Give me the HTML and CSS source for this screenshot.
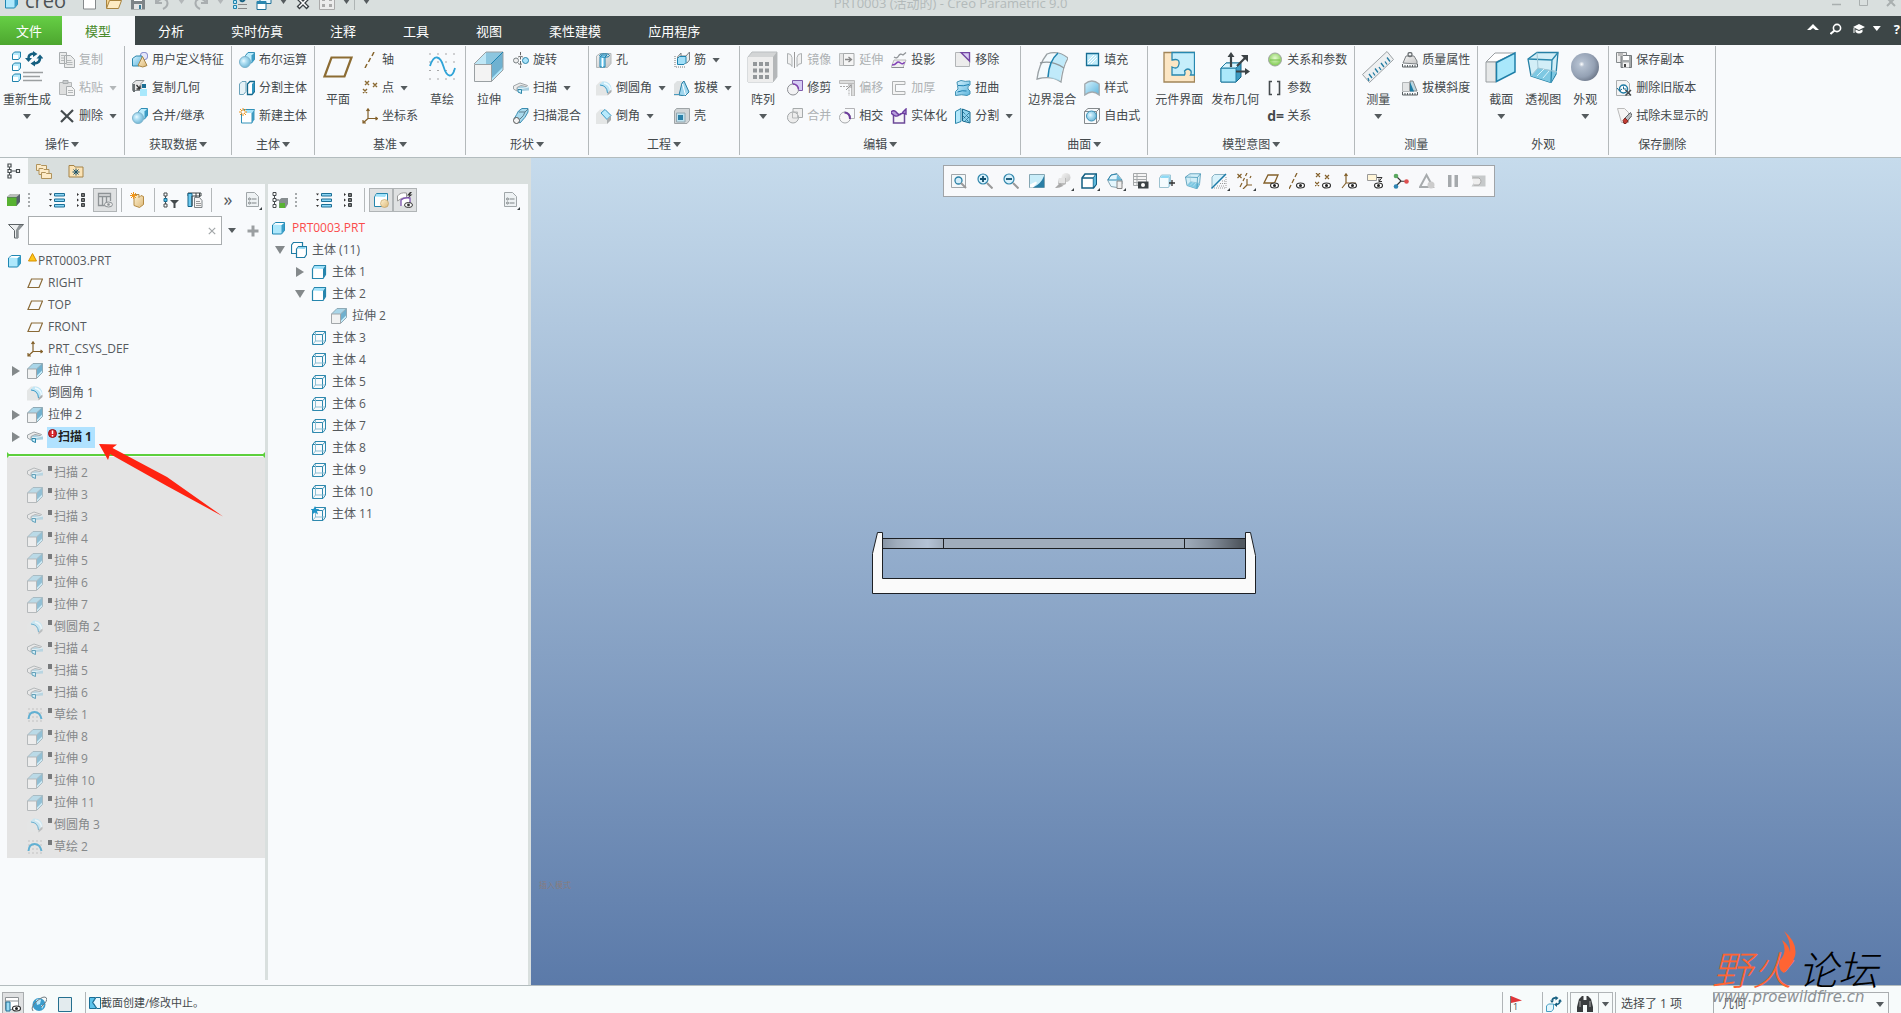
FILE: index.html
```html
<!DOCTYPE html>
<html lang="zh-CN">

<head>
    <meta charset="UTF-8">
    <meta name="viewport" content="width=device-width, initial-scale=1.0">
    <title>PRT0003 (活动的) - Creo Parametric 9.0</title>
    <link rel="stylesheet" href="styles.css">
</head>

<body>
    <!-- icon sprite -->
    <svg class="sprite" aria-hidden="true">
        <defs>
            <linearGradient id="gBlue" x1="0" y1="0" x2="1" y2="1"><stop offset="0" stop-color="#d8f4ff"/><stop offset="1" stop-color="#5cb4dc"/></linearGradient>
            <linearGradient id="gGrey" x1="0" y1="0" x2="1" y2="1"><stop offset="0" stop-color="#f4f4f4"/><stop offset="1" stop-color="#c4c4c4"/></linearGradient>
            <linearGradient id="gTan" x1="0" y1="0" x2="1" y2="1"><stop offset="0" stop-color="#fff3d4"/><stop offset="1" stop-color="#dcb878"/></linearGradient>
            <radialGradient id="gBall" cx=".38" cy=".4" r=".65"><stop offset="0" stop-color="#eefaff"/><stop offset=".3" stop-color="#b8e4f6"/><stop offset="1" stop-color="#6cb4d4"/></radialGradient>
            <radialGradient id="gSphere" cx=".38" cy=".4" r=".65"><stop offset="0" stop-color="#ffffff"/><stop offset=".15" stop-color="#b4c0d0"/><stop offset=".7" stop-color="#94a1b4"/><stop offset="1" stop-color="#6f7a8c"/></radialGradient>
            <radialGradient id="gGreen" cx=".5" cy=".4" r=".6"><stop offset="0" stop-color="#e4fad0"/><stop offset="1" stop-color="#7cc94c"/></radialGradient>
        </defs>
        <symbol id="copy" viewBox="0 0 16 16"><path d="M.5.5h7v11h-7zM5.500 3.500h6l4 4v8h-10z" fill="#ebecec" stroke="#a9adaf"/><path d="M2 3.500h3M2 6h3M2 8.500h3M7.500 8.500h5M7.500 10.500h6M7.500 12.500h6" stroke="#b5b9ba"/></symbol>
        <symbol id="paste" viewBox="0 0 16 16"><path d="M.5 2.500h12v12H.5z" fill="#dedfdf" stroke="#b4b7b8"/><path d="M4 .5h5v3H4z" fill="#c8cbcc" stroke="#a9adaf"/><path d="M7.500 6.500h5l3 3v6h-8z" fill="#f3f3f3" stroke="#a9adaf"/><path d="M9 10.500h5M9 12.500h5" stroke="#b5b9ba"/></symbol>
        <symbol id="del" viewBox="0 0 16 16"><path d="M2 2.500 14 14M14 2 2 14" stroke="#444b4e" stroke-width="2.200" fill="none"/></symbol>
        <symbol id="udf" viewBox="0 0 16 16"><circle cx="12" cy="4" r="3.800" fill="#e4e6fa" stroke="#7f86c8"/><path d="M.5 6.500 4 4h6v7l-3 3H.5z" fill="url(#gBlue)" stroke="#2a86ac"/><path d="m10.500 4.500 4.500 9q-4 3-9 0z" fill="url(#gTan)" stroke="#a98747"/></symbol>
        <symbol id="copygeo" viewBox="0 0 16 16"><path d="M.5 3.500 4 .5h8l-3 3v7H.5z" fill="#e8e8e8" stroke="#888d90"/><path d="M1 4h2v8H1z" fill="#666d70"/><path d="m4.500 5 3 3.500M8 5.500v3.500H4.500" stroke="#333" fill="none" stroke-width="1.300"/><path d="M8 9h7v7H8z" fill="#a8e8fc"/><path d="M10 4h4v4h-4z" fill="#1b6e94"/></symbol>
        <symbol id="boolean" viewBox="0 0 16 16"><path d="M6.500 3.500 9 .5h6.500v7l-3 3.500h-6z" fill="#bcecfc" stroke="#2f8db5"/><path d="m12.500 3.500 3-3v7l-3 3.500z" fill="#3d9cc4"/><circle cx="6" cy="10" r="5.500" fill="url(#gBall)" stroke="#7db4cc"/></symbol>
        <symbol id="splitbody" viewBox="0 0 16 16"><path d="M.5 4 3 1.500h4v10L4.500 14.500h-4z" fill="#e6f2f7" stroke="#6ba3bb"/><path d="M8.500 4 11 1.500h4.500v10L13 14.500H8.500z" fill="#fff" stroke="#13678b" stroke-width="1.300"/><path d="M13 4v10l2.500-3V1.500z" fill="#2f95bf"/></symbol>
        <symbol id="newbody" viewBox="0 0 16 16"><path d="m2.500 5 2-3.500h11L13 5v10H2.500z" fill="#fff" stroke="#3191b8"/><path d="m13 5 2.500-3.500v10L13 15z" fill="#3c9ac1"/><path d="M6 2h9l-2 3H7z" fill="#a8e4fb"/><path d="M4 0v8M0 4h8M1 1l6 6M7 1 1 7" stroke="#f0951a"/><circle cx="4" cy="4" r="1.500" fill="#fff"/></symbol>
        <symbol id="axis" viewBox="0 0 16 16"><path d="m12 0-2 4M8.500 6l-2 4M5 12l-2 4" stroke="#86642c" stroke-width="1.500"/></symbol>
        <symbol id="point" viewBox="0 0 16 16"><path d="m3 1 4 4M7 1 3 5M11 3l4 4M15 3l-4 4M1 9l4 4M5 9l-4 4" stroke="#8b6a33" stroke-width="1.400"/></symbol>
        <symbol id="csys" viewBox="0 0 16 16"><path d="M6 1v9.500h9.500M6 10.500 1 15M4.500 3 6 .8 7.500 3M13.500 9l2 1.500-2 1.500M1 12v3h3" stroke="#83602a" stroke-width="1.200" fill="none"/></symbol>
        <symbol id="revolve" viewBox="0 0 16 16"><circle cx="3" cy="8.500" r="2.500" fill="#eee" stroke="#7a8285"/><circle cx="12.500" cy="8.500" r="3" fill="#a9e4fb" stroke="#2b85aa"/><path d="M7.500 0v16" stroke="#666" stroke-dasharray="3 1.500"/><path d="M5 5q2.500-1.500 5 0M9 12q-2 1-4-.5" stroke="#777" fill="none"/></symbol>
        <symbol id="sweep" viewBox="0 0 16 16"><path d="M3.500 8 8 6l8 1v3.500L9 11v3l-4-2z" fill="#a8cfe0"/><path d="M.5 6 7 3l7.500 2.500-1 1.200L8 5.500 4 7.500V11L.5 9z" fill="#ececec" stroke="#9fa5a8"/><path d="M5 8.500h4l7-1.500" stroke="#dff1f8" fill="none"/><path d="M5 9.500h3.500v4L5 12z" fill="#c8effc" stroke="#2f86a9"/></symbol>
        <symbol id="blend" viewBox="0 0 16 16"><path d="M1 11Q4 6 5.500 3L9 .5h6V4Q13 9 7 15z" fill="#a9daee" stroke="#3a8db1"/><path d="M6 4h6l3-3M12 4q-1 4-5 7" stroke="#5b7f8e" fill="none"/><circle cx="3.500" cy="12.500" r="3" fill="#f3f3f3" stroke="#555"/></symbol>
        <symbol id="hole" viewBox="0 0 16 16"><path d="M.5 4 4 1.500h11v10l-3.500 4H.5z" fill="url(#gGrey)" stroke="#b3b8ba"/><path d="M4 4.500 6 3h5L9 5v10H4z" fill="#a2e0fa" stroke="#1b81af"/><ellipse cx="8.500" cy="3.500" rx="5" ry="1.800" fill="none" stroke="#1b81af"/><path d="M6.500 6v9" stroke="#fff"/></symbol>
        <symbol id="round" viewBox="0 0 16 16"><path d="M0 5.500 4 1.500h6q5 2 5 7v3l-4 4H0z" fill="#e4e6e6"/><path d="M3 5 6.500 1.500Q15 1 15.500 9l-4 3.500Q11 5.500 3 5z" fill="#bfe6f6"/><path d="M8 3q6 1.500 6.500 7" stroke="#eefaff" fill="none" stroke-width="1.500"/><path d="M4 5q7 .5 7.500 8" stroke="#3a9ac6" fill="none"/><path d="m11.500 13 4-3.500V12l-4 3.500z" fill="#a9adaf"/></symbol>
        <symbol id="chamfer" viewBox="0 0 16 16"><path d="M0 5.500 4 1.500h6l5 5.500v5l-4 4H0z" fill="#e4e6e6"/><path d="m5 5 4-3.500 6 6-4 4z" fill="#b8eafc" stroke="#3a9ac6"/><path d="m11 11.500 4-4V12l-4 4z" fill="#a9adaf"/></symbol>
        <symbol id="rib" viewBox="0 0 16 16"><path d="M1 4v11h11" fill="none" stroke="#777" stroke-dasharray="1 1"/><path d="M3.500 5v6H13l2.500-3V0L12 4H7V1z" fill="#eceeee" stroke="#7b8285"/><path d="m3.500 6.500 2-2H12v6l-2 2H3.500z" fill="#a2dff8" stroke="#1e83ae"/></symbol>
        <symbol id="draft" viewBox="0 0 16 16"><path d="M0 4 3 1h7l5 10-4 5H0z" fill="#dfe2e3"/><path d="m5 15 3-12 2-2 5 11-4 4z" fill="#9fd6ee" stroke="#2a7fa4"/><path d="m8.500 4 3 11" stroke="#fff"/><path d="M0 14.500h5" stroke="#4a9cc0"/></symbol>
        <symbol id="shell" viewBox="0 0 16 16"><path d="m.5 3 2-2.500h13v12L13 15.500H.5z" fill="#d1d5d7" stroke="#9ea4a7"/><path d="M2.500 5H11v9H2.500z" fill="#bde2f0" stroke="#96a8b0"/><path d="M4 7h5v5H4z" fill="#2a80a8"/></symbol>
        <symbol id="mirror" viewBox="0 0 16 16"><path d="M.5 1.500q4 0 4.500 4v9q-1-3-4.500-3zM14.500 1.500q-4 0-4.500 4v9q1-3 4.500-3z" fill="#f1f1f1" stroke="#adb1b3"/><path d="M7.500 0v16" stroke="#999"/></symbol>
        <symbol id="trim" viewBox="0 0 16 16"><path d="M5.500.5h10v10h-10z" fill="#d6ccf4" stroke="#7e5bab"/><circle cx="6" cy="9.500" r="5.500" fill="#f2f2f4" stroke="#8c8f94"/><path d="M6 4a5.500 5.500 0 0 1 5.500 5.500" stroke="#7e3fae" stroke-width="1.500" fill="none"/></symbol>
        <symbol id="merge" viewBox="0 0 16 16"><path d="M6 .5h9.500v9H10V5H6z" fill="#eee" stroke="#a6aaab"/><circle cx="6" cy="9.500" r="5.500" fill="#ececec" stroke="#a2a6a8"/><path d="M5.500 4h5v6h-5z" fill="none" stroke="#b7b9ba"/></symbol>
        <symbol id="extend" viewBox="0 0 16 16"><path d="M.5 1.500h4v12h-4z" fill="#e5e5e5" stroke="#b9bcbd"/><path d="M4.500 1.500H15v12H4.500z" fill="#f5f5f5" stroke="#a8abac"/><path d="M6 7.500h6M9.500 5l3 2.500-3 2.500" stroke="#888" stroke-width="1.300" fill="none"/></symbol>
        <symbol id="offset" viewBox="0 0 16 16"><path d="M.5.5h15v3h-15zM12.500 3.500h3V16h-3z" fill="#dcdddd" stroke="#bbb"/><path d="M1 6.500h9V16" stroke="#aaa" fill="none" stroke-dasharray="2 1"/><path d="m7 10 5-5M9 5h3v3" stroke="#999" fill="none"/></symbol>
        <symbol id="intersect" viewBox="0 0 16 16"><path d="M6 .5h9.500v10H10" fill="none" stroke="#b3b3b6"/><circle cx="6" cy="9.500" r="5.500" fill="#f7f7f7" stroke="#a6a9ac"/><path d="M5.500 4.500q5.500.5 5.500 6.500" stroke="#6d3c9c" stroke-width="2" fill="none"/></symbol>
        <symbol id="project" viewBox="0 0 16 16"><path d="M3 5q3 2 4.500-1T12 3l3-2.500" stroke="#909498" stroke-width="1.300" fill="none"/><path d="M0 15.500 3 8h12l-3 7.500z" fill="#f0f0f0" stroke="#b8b8b8"/><path d="M1 13q3 0 4.500-2t4 0 4-1" stroke="#8344b8" stroke-width="1.600" fill="none"/><path d="M1 15.500h12" stroke="#8a8d90"/></symbol>
        <symbol id="thicken" viewBox="0 0 16 16"><path d="M1.500 1.500H14v3H4.500v7H14v3H1.500z" fill="#f4f4f4" stroke="#aeb1b2"/></symbol>
        <symbol id="solidify" viewBox="0 0 16 16"><path d="M2.500 5v10h11V5" fill="#f5f5f7" stroke="#6c4a98" stroke-width="1.500"/><path d="M0 4q3-3 6 1t6-1l3-3v5q-4-2-7 1T0 5z" fill="#b79ddc" stroke="#6b3e9f" stroke-width="1.400"/></symbol>
        <symbol id="remove" viewBox="0 0 16 16"><path d="M.5.5h14v14H.5z" fill="#ececec" stroke="#b2b5b7"/><path d="M6 .5h8.500V9z" fill="#d9cdf5" stroke="#7446a3" stroke-width="1.400"/></symbol>
        <symbol id="twist" viewBox="0 0 16 16"><path d="M2 2 6 .5q4 1.500 9 .5v4q-3 1-2 4l2 2v3l-3 1.500q-5-1.500-11.500 0v-4q4-2 2-6z" fill="url(#gBlue)" stroke="#4292b4"/><path d="M3 5.500q5 1 11-1M2.500 12q5-2 9-1" stroke="#1d80b0" fill="none"/></symbol>
        <symbol id="split" viewBox="0 0 16 16"><path d="M.5 3.500 6 .5v13l-5.500 2z" fill="#b3e8fb" stroke="#2c86aa"/><path d="m7.500 1 7.500 3v11l-7.500-2z" fill="#8ed4ee" stroke="#16698d"/><path d="m8 4 6 6M8 8l6 6M14 5l-6 6M14 9l-4 4" stroke="#12577a" stroke-dasharray="1 1"/></symbol>
        <symbol id="fill" viewBox="0 0 16 16"><path d="M2.500 1.500h12v12h-12z" fill="#c0ecfb" stroke="#176e94" stroke-width="1.300"/><path d="m4 9 6-6M4 12l8-8M7 12l6-6" stroke="#fff"/></symbol>
        <symbol id="style" viewBox="0 0 16 16"><path d="M.8 4q7-6 14.400 0v11q-7-6-14.400 0z" fill="url(#gBlue)" stroke="#a2a9ad" stroke-width="1.300"/></symbol>
        <symbol id="freestyle" viewBox="0 0 16 16"><path d="M.5 3.500 4 .5h11.500v11l-3 4H.5zM.5 3.500h12v12M12.500 3.500l3-3" fill="none" stroke="#84898c"/><circle cx="7.500" cy="8" r="5" fill="url(#gBall)" stroke="#3b92b8"/></symbol>
        <symbol id="ball" viewBox="0 0 16 16"><circle cx="8" cy="7.500" r="6.500" fill="url(#gGreen)" stroke="#a0a6a1"/><path d="M3 8h10" stroke="#74bf48"/></symbol>
        <symbol id="bracket" viewBox="0 0 16 16"><path d="M5 1.500H2.500v13H5M10 1.500h2.500v13H10" fill="none" stroke="#454b4e" stroke-width="1.600"/></symbol>
        <symbol id="mass" viewBox="0 0 16 16"><path d="m1 11 3-7h8l3 5v3z" fill="url(#gGrey)" stroke="#7c8184"/><circle cx="8" cy="2.500" r="2" fill="none" stroke="#6b7073" stroke-width="1.300"/><path d="M.5 12v3h15v-3M3 13v2M5.500 13v2M8 13v2M10.500 13v2M13 13v2" stroke="#5a6063" fill="none"/></symbol>
        <symbol id="draftchk" viewBox="0 0 16 16"><path d="M.5 2.500h7v9h-7z" fill="#e3e5e6" stroke="#b2b6b8"/><path d="m8 1 3 0 4 10H8z" fill="#b8d6e2" stroke="#888"/><path d="m8 2 4 9.500H8z" fill="#1b7ba3"/><path d="M.5 12v3h15v-3M3 13v2M5.500 13v2M8 13v2M10.500 13v2M13 13v2" stroke="#5a6063" fill="none"/></symbol>
        <symbol id="savecopy" viewBox="0 0 16 16"><path d="M.5.5h10v10H.5z" fill="#eee" stroke="#858a8d"/><path d="M5 3.500h10.500V15.500H5z" fill="#a6aaac" stroke="#74797c"/><path d="M7 4h6v4H7z" fill="#fff"/><path d="M7 10.500h6v5H7z" fill="#f3f3f3"/><path d="M8 12h2v3H8z" fill="#444"/><path d="M2 1h5v3H2z" fill="#bbb"/></symbol>
        <symbol id="delold" viewBox="0 0 16 16"><path d="M.5.5h10l3 3v12H.5z" fill="#f4f4f4" stroke="#a9adaf"/><circle cx="7.500" cy="9" r="4" fill="#fff" stroke="#1c7aa4" stroke-width="1.500"/><path d="M7.500 6.500V9H10M1 8l2.500 3L6 9" stroke="#14678c" fill="none"/><path d="m9.500 10 5.500 5.500M15 10l-5.500 5.500" stroke="#454b4e" stroke-width="1.500"/></symbol>
        <symbol id="erase" viewBox="0 0 16 16"><path d="M1.500.5h7l4 4v10h-7z" fill="#f5f5f5" stroke="#bbb"/><path d="m8.500 10.500 6-6 1.500 3-5 6z" fill="#b9bdc0" stroke="#5e6467"/><path d="m7 12.500 2-2.500 3 3-2 2.500H8z" fill="#c33b32" stroke="#7e2a25"/></symbol>

        <symbol id="regen" viewBox="0 0 32 32"><g fill="#b8eafc" stroke="#2083ac"><path d="m1.500 3 2-2h6v5l-2 2.500h-6zM1.500 14l2-2h6v5l-2 2.500h-6zM1.500 25l2-2h6v5l-2 2.500h-6z"/></g><g fill="#fff"><path d="M2 4h5v4H2zM2 15h5v4H2zM2 26h5v4H2z"/></g><path d="M12 21.500h20M12 25.500h17M12 29.500h19" stroke="#9b9fa1" stroke-width="1.600"/><path d="M17.500 8q-.5-5 5-5.500M29 6q.5 6-5.500 6.500" stroke="#155f80" stroke-width="2.600" fill="none"/><path d="m22 0 4.500 3L22 6zM24 9.500v6l-4.500-3zM14 7h7l-3.500 4zM25.500 7.500h7L29 3.500z" fill="#155f80"/></symbol>
        <symbol id="plane" viewBox="0 0 32 32"><path d="M9.500 6.500h20l-7 19h-20z" fill="none" stroke="#8c6c33" stroke-width="2.200"/></symbol>
        <symbol id="sketch" viewBox="0 0 32 32"><path d="M3.500 3h26M3.500 11h26M3.500 19.500h26M3.500 28h26" stroke="#555" stroke-width="1.200" stroke-dasharray="1 7"/><path d="M4 15Q7 6 11 6.500q4 .5 6.500 9t6 9Q27 25 29 17" stroke="#2fa4d8" stroke-width="1.800" fill="none"/></symbol>
        <symbol id="extrude" viewBox="0 0 32 32"><path d="M1 13 13 1h17L18 13z" fill="#bfe7f6"/><path d="M13 1h17L18 13h-5z" fill="#8cc6df"/><path d="M18 13 30 1v18L18 31z" fill="#6fb1d0"/><path d="M18 31V28l12-12v3z" fill="#b0e6fa"/><path d="M1 13 13 1h17v18L18 31" fill="none" stroke="#9aa0a3"/><path d="M18 13 30 1" stroke="#1d84b2"/><path d="M1.500 13.500h17v17h-17z" fill="#f3f3f3" stroke="#9aa0a3"/></symbol>
        <symbol id="pattern" viewBox="0 0 32 32"><path d="M1 6 5 1h25v25l-4 5H1z" fill="#d3d5d6" stroke="#bbbfc1"/><path d="M1 6h25v25H1z" fill="#ededed"/><path d="m26 6 4-5v25l-4 5z" fill="#b4b7b9"/><path d="M6 11h4v4H6zM12 11h4v4h-4zM18 11h4v4h-4zM6 17.500h4v4H6zM12 17.500h4v4h-4zM18 17.500h4v4h-4zM6 24h4v4H6zM12 24h4v4h-4zM18 24h4v4h-4z" fill="#93979a"/></symbol>
        <symbol id="boundary" viewBox="0 0 32 32"><path d="M11 3q11-4 21 4-5 8-7 24-9-7-24-3Q3 13 11 3z" fill="#f3fafd" stroke="#9aa1a5" stroke-width="1.300"/><path d="M22 2q6 2 9 5-5 10-7 23l-12-4q2-14 10-24z" fill="#a9e2f8" opacity=".7"/><path d="M4 12q12-3 24 5" stroke="#8e979b" fill="none" stroke-width="1.300"/><path d="M22 2q-9 8-10 24" stroke="#1f84b0" stroke-width="1.600" fill="none"/></symbol>
        <symbol id="compif" viewBox="0 0 32 32"><path d="M1 1.500h30.500V31H1z" fill="#fce6c4" stroke="#a08558" stroke-width="1.300"/><path d="M9 1.500h22.500V24h-4q1-1.500.500-4-3-4-6.500 0 1 2 0 4H9v-8q6 3 7-3t-7-4z" fill="#c6eefb" stroke="#2788b0" stroke-width="1.300"/></symbol>
        <symbol id="publish" viewBox="0 0 32 32"><path d="m2 17 5-5h15v14l-5 5H2z" fill="#3e9bc2" stroke="#146486"/><path d="M2 17h15v14H2z" fill="#abe8fb" stroke="#207ea4"/><path d="m2 17 5-5h15l-5 5z" fill="#d8f4fd" stroke="#207ea4"/><path d="M12 16V4M18 15l9-9M17 20.500h12" stroke="#3c4346" stroke-width="2.200"/><path d="m8.500 6 3.500-5 3.500 5zM22 4h7v7zM26 17l5 3.500-5 3.500z" fill="#3c4346"/></symbol>
        <symbol id="measure" viewBox="0 0 32 32"><path d="M.5 23.500 25 .5l6.500 8L7.500 31.500z" fill="#eef0f1" stroke="#9ba1a4"/><path d="m7 30-1-3M10 27l-3-4M13 24.500l-2-3M16 21.500l-3-4M19 19l-2-3M22 16l-3-4M25 13.500l-2-3M28 10.500l-3-4" stroke="#217ba2" stroke-width="1.300"/></symbol>
        <symbol id="section" viewBox="0 0 32 32"><path d="m1 11 9-9h20L11 11z" fill="#fff" stroke="#9a9fa2"/><path d="M1 11h10v20H1z" fill="#e6e8e8" stroke="#9a9fa2"/><path d="M11.500 11.500 30 2v19l-18.500 9.500z" fill="#a9e8fb" stroke="#1e7fa8" stroke-width="1.500"/></symbol>
        <symbol id="persp" viewBox="0 0 32 32"><path d="m1 8 9-6.500h21L29 23l-5 8.500L4 25z" fill="#d2eef7" stroke="#2580a5" stroke-width="1.300"/><path d="M4 25 11 17l19 3-6 11.500z" fill="#7ec8e2"/><path d="m1 8 24 1 6-7.500M25 9l-1 22" stroke="#2a87ac" fill="none" stroke-width="1.300"/><path d="M10 1.500 11 17l19 4M4 25l7-8" stroke="#a3c6d4" fill="none"/><path d="m10 25 7-7M16 27l6-7" stroke="#d8f3fc"/></symbol>
        <symbol id="sphere" viewBox="0 0 32 32"><circle cx="16" cy="16" r="14" fill="url(#gSphere)"/></symbol>

        <symbol id="cube" viewBox="0 0 16 16"><path d="m1.500 5 3-2.500h9v8l-3 3.500h-9z" fill="#aee8fc" stroke="#1f86b2"/><path d="m10.500 5 3-2.500v8l-3 3.500z" fill="#3c9fc9"/><path d="m2 4.500 3-1.500h8l-2.500 2z" fill="#fff"/></symbol>
        <symbol id="gcube" viewBox="0 0 16 16"><path d="m1 5 3.500-3H14v8l-3.500 4H1z" fill="#55606a"/><path d="m1 5 3.500-3H14l-3.500 3z" fill="#b9bdb9"/><path d="M1 5.500h9.500V14H1z" fill="#58b232"/></symbol>
        <symbol id="bodies" viewBox="0 0 16 16"><path d="m.5 3 2-2.500h9v8l-2 3h-9z" fill="#fff" stroke="#1f7ca4" stroke-width="1.200"/><path d="m5.500 7 2-2.500h8v8l-2 3h-8z" fill="#fff" stroke="#1f7ca4" stroke-width="1.200"/><path d="m6 6.500 1.500-1.500H15l-1.500 2z" fill="#8cd5f0"/></symbol>
        <symbol id="body" viewBox="0 0 16 16"><path d="m1.500 5 2-3.500h11v9l-2.500 4H1.500z" fill="#fff" stroke="#2686ad" stroke-width="1.200"/><path d="m2 4.500 2-2.500h10l-2 3z" fill="#9fe2fb"/><path d="m12 5 2.500-3.500v9l-2.500 4z" fill="#2885ad"/></symbol>
        <symbol id="ebody" viewBox="0 0 16 16"><path d="m1.500 5 2.500-3.500h10.500v9.500l-2.500 3.500H1.500zM1.500 4.500h10v10M12 4.500l2.500-3" fill="none" stroke="#2f89ae"/><path d="M4.500 2v9H14M2 14l2.500-3" stroke="#8bbfd4" fill="none"/></symbol>
        <symbol id="star" viewBox="0 0 16 16"><use href="#ebody"/><path d="m4 0 1.300 3H8.500L6 5l1 3.500L4 6.500 1 8.500 2 5-.5 3h3.200z" fill="#1e95c9"/></symbol>
        <symbol id="ext" viewBox="0 0 16 16"><path d="m.5 6 5.500-5.500h9.500L9.500 6z" fill="#a9d6e9"/><path d="M9.500 6l6-5.500v9l-6 6z" fill="#6fb0ce"/><path d="m9.500 15.500V13l6-6v2.500z" fill="#c5ecfb"/><path d="m.5 6 5.500-5.500h9.500v9l-6 6M9.500 6l6-5.500" stroke="#8faab6" fill="none"/><path d="M.5 6h9v9.500h-9z" fill="#f1f2f2" stroke="#a2a7aa"/></symbol>
        <symbol id="dplane" viewBox="0 0 16 16"><path d="M4.500 4h11L12 12.500H1z" fill="none" stroke="#8a6a37" stroke-width="1.200"/></symbol>
        <symbol id="curve" viewBox="0 0 16 16"><path d="M1.500 2h14M1.500 6h14M1.500 10h14M1.500 14h14" stroke="#888" stroke-dasharray="1 3"/><path d="M1.500 12Q2 5 7.500 5t7 7" stroke="#2b9bcc" stroke-width="2" fill="none"/></symbol>

        <symbol id="mtree" viewBox="0 0 16 16"><path d="M3.500 4v8M3.500 8H11" stroke="#4b5154"/><path d="M2 1h3v3H2zM2 6.500h3v3H2zM2 12h3v3H2zM10.500 6.500h3v3h-3z" fill="#fff" stroke="#444a4d" stroke-width="1.200"/></symbol>
        <symbol id="layers" viewBox="0 0 16 16"><g fill="#fdebc8" stroke="#b0935c"><path d="M.5 1.500h4l1 1h5v5h-10z"/><path d="M3 5.500h4l1 1h5v5H3z"/><path d="M5.500 9.500h4l1 1h5v5h-10z"/></g></symbol>
        <symbol id="favs" viewBox="0 0 16 16"><path d="M1 2.500h5l1 1.500h8v10H1z" fill="#fbe3b5" stroke="#a48348"/><path d="M8 5.500v7M4.500 9h7M5.500 6.500l5 5M10.500 6.500l-5 5" stroke="#174f68"/></symbol>
        <symbol id="tlist" viewBox="0 0 16 16"><path d="M0 1.500h3l-1.500 2zM0 7h3L1.500 9zM0 13h3l-1.500 2z" fill="#333"/><path d="M5.500 1.500h10v2.500h-10zM5.500 7h10v2.500h-10zM5.500 12.500h10v2.500h-10z" fill="#8bd6f5" stroke="#1c6f96"/></symbol>
        <symbol id="tlist2" viewBox="0 0 16 16"><path d="m4 1 2 1.500L4 4zM4 6.500 6 8 4 9.500zM4 12l2 1.500L4 15z" fill="#333"/><path d="M8.500 1.500h3v3h-3zM8.500 6.500h3v3h-3zM8.500 11.500h3v3h-3z" fill="#777" stroke="#3b4144"/></symbol>
        <symbol id="cols" viewBox="0 0 16 16"><path d="M1.500 1.500h12v3h-12zM1.500 4.500h4v9h-4zM5.500 4.500h4v9h-4zM9.500 4.500h4V9" fill="none" stroke="#8e9396" stroke-width="1.300"/><ellipse cx="11.500" cy="12.500" rx="4" ry="2.500" fill="#e6e6e6" stroke="#8e9396"/><circle cx="11.500" cy="12.500" r="1.300" fill="#8e9396"/></symbol>
        <symbol id="newpart" viewBox="0 0 16 16"><path d="M4 2.500h5v3l2-2 2.500 1v8l-4 3-5.500-2z" fill="url(#gTan)" stroke="#b58b43"/><path d="M3.500 0v7M0 3.500h7M1 1l5 5M6 1 1 6" stroke="#f0951a"/></symbol>
        <symbol id="tfilter" viewBox="0 0 16 16"><path d="M2.500 3v11" stroke="#4b5154"/><path d="M1 1h3v3H1zM1 12h3v3H1z" fill="#fff" stroke="#444a4d"/><path d="M1 6.500h3v3H1z" fill="#4cc0ea" stroke="#1a6b90"/><path d="M7 8h9l-3.500 3.500V16h-2v-4.500z" fill="#444a4d"/></symbol>
        <symbol id="tcols" viewBox="0 0 16 16"><path d="M1 1h13v3H1z" fill="#fff" stroke="#3d4447"/><path d="M1 1.500h4v13H1z" fill="#6ccaf0" stroke="#14658a"/><path d="M5 4v10M9 1v5M12.500 1v4" stroke="#3d4447"/><path d="M7.500 5.500h5l2.500 3v7H7.500z" fill="#f5f5f5" stroke="#7f8588"/><path d="M9 9.500h4M9 11.500h5M9 13.500h5" stroke="#999"/></symbol>
        <symbol id="page" viewBox="0 0 16 16"><path d="M2.500.5h8l4 4v10h-12z" fill="#eef2f4" stroke="#a0a6a9"/><path d="M7.500 7h5M7.500 11h5" stroke="#7e8487"/><circle cx="5.500" cy="7" r="1" fill="none" stroke="#7e8487"/><circle cx="5.500" cy="11" r="1" fill="none" stroke="#7e8487"/></symbol>
        <symbol id="treecube" viewBox="0 0 16 16"><path d="M2.500 3v11M3 8h4" stroke="#4b5154"/><path d="M1 .5h3v3H1zM1 6.500h3v3H1zM1 12.500h3v3H1z" fill="#fff" stroke="#444a4d"/><path d="m7 8 2.500-2H16v6l-2.500 4H7z" fill="#868d8f"/><path d="M7.500 11H13v5H7.500z" fill="#58b232"/></symbol>
        <symbol id="bodyball" viewBox="0 0 16 16"><path d="m1.500 5 2-3.500h11v9l-2.500 4H1.500z" fill="#fff" stroke="#2686ad"/><path d="m2 4.500 2-2.500h10l-2 3z" fill="#9fe2fb"/><circle cx="11.500" cy="11.500" r="4" fill="url(#gTan)" stroke="#bd9b5b" stroke-width=".6"/></symbol>
        <symbol id="quilt" viewBox="0 0 16 16"><path d="M.5 9V4q3-4 9-3v5q-5-1-9 3z" fill="#fff" stroke="#999"/><path d="M4 14V8q3-3 9-2v6" fill="#fff" stroke="#7e55b0" stroke-width="1.300"/><path d="m13 0-3 3.500h2.500L11 6l4.500-3.500H13L15 0z" fill="#333"/><ellipse cx="11.500" cy="13" rx="4" ry="2.500" fill="#fff" stroke="#333"/><circle cx="11.500" cy="13" r="1.400" fill="#333"/></symbol>
        <symbol id="funnel" viewBox="0 0 16 16"><path d="M.5 1.500h15l-5.500 6v7.500H6.500V7.500z" fill="#eceeef" stroke="#5d6366"/><path d="M10 7.500 15 2h-4L8 7v8h2z" fill="#8d9396"/></symbol>
        <symbol id="plus" viewBox="0 0 16 16"><path d="M8 2.500v11M2.500 8h11" stroke="#9b9fa1" stroke-width="3"/></symbol>

        <symbol id="refit" viewBox="0 0 16 16"><path d="M.5 1.500h14v13H.5z" fill="#f4f8fa" stroke="#a0a6aa"/><circle cx="7.500" cy="7.500" r="3.500" fill="#d5eefa" stroke="#2b80a6" stroke-width="1.300"/><path d="m10 10 5 5" stroke="#999" stroke-width="2"/></symbol>
        <symbol id="zin" viewBox="0 0 16 16"><circle cx="6" cy="6" r="5" fill="#d8f1fc" stroke="#3086ab" stroke-width="1.200"/><path d="M6 3v6M3 6h6" stroke="#10506f" stroke-width="1.800"/><path d="m10 10 5.500 5.500" stroke="#999" stroke-width="2"/></symbol>
        <symbol id="zout" viewBox="0 0 16 16"><circle cx="6" cy="6" r="5" fill="#d8f1fc" stroke="#3086ab" stroke-width="1.200"/><path d="M3 6h6" stroke="#10506f" stroke-width="1.800"/><path d="m10 10 5.500 5.500" stroke="#999" stroke-width="2"/></symbol>
        <symbol id="repaint" viewBox="0 0 16 16"><path d="M.5 1.500h15v13H.5z" fill="#c9edf9" stroke="#85a6b3"/><path d="M15 3v11.500H4Q12 11 15 3z" fill="#2a7ea5"/><path d="M1 11.500 7 8.500l1 1.500-4 4.500H1z" fill="#fff"/></symbol>
        <symbol id="shade" viewBox="0 0 16 16"><circle cx="11" cy="4.500" r="4.500" fill="url(#gGrey)"/><path d="M4 5h7v6l-4 2-4-2z" fill="#bbb"/><path d="M4 5h6v5H4z" fill="#e4e4e4"/><path d="m0 15 5-5 3 3q-4 2.500-8 2z" fill="#a8a8a8"/></symbol>
        <symbol id="box" viewBox="0 0 16 16"><path d="m1 5 3-4h11.500v10l-3 4H1z" fill="#fff" stroke="#125f83" stroke-width="1.500"/><path d="M1 5h11.500v10M12.500 5l3-4" stroke="#125f83" fill="none" stroke-width="1.400"/><path d="m12.500 5 2.500-3.500V11l-2.500 3z" fill="#5cb8dc"/></symbol>
        <symbol id="orient" viewBox="0 0 16 16"><path d="m4 2 6-1.500L15 7v4l-5 3.500-6-1L.5 7z" fill="#e4f6fd" stroke="#86a4b1"/><path d="m10 1.500 4.500 5H9.500z" fill="#6bbbdc"/><path d="m1 7 3-5 6-1M1 7h14" fill="none" stroke="#2e88b0"/><path d="M10 8h5v7.500h-5z" fill="#eee" stroke="#888"/></symbol>
        <symbol id="views" viewBox="0 0 16 16"><path d="M.5.5h13v12H.5zM.5 3.500h13M.5 6.500h13M.5 9.500h13M4 .5v12" fill="#f5f5f5" stroke="#a5a9ab"/><path d="M5 8.500h10.500v7H5z" fill="#3b4144"/><circle cx="10" cy="12" r="2" fill="#fff"/></symbol>
        <symbol id="anno" viewBox="0 0 16 16"><path d="m.5 5 2-3h9v9l-2 3.500h-9z" fill="#f4fbfe" stroke="#9dc2d0"/><path d="m1 5 2-2.500h8L9.500 5z" fill="#8fdaf5"/><path d="M9.500 5 11.500 2v9l-2 3.500z" fill="#9ccde0"/><path d="M10 10h6M13 7v6" stroke="#333" stroke-width="1.300"/></symbol>
        <symbol id="sect2" viewBox="0 0 16 16"><path d="M1 15V4l2.500-2.500H14z" fill="#d9f2fb" stroke="#8ab3c4"/><path d="M3 15h12V3M6 13h8M9 10.500h5M11 8h3" stroke="#999" stroke-dasharray="1 1" fill="none"/><path d="M.5 15.500 15 1" stroke="#1b7ba8" stroke-width="1.400"/></symbol>
        <symbol id="dtm" viewBox="0 0 16 16"><path d="m.5 1 4 4M4.500 1l-4 4M10 0 8.500 3M7.500 5 6 8M5 10l-2 4M10 6v6h5M10 12l-4 4M14 3l-1 2" stroke="#83602a" stroke-width="1.200" fill="none"/></symbol>
        <symbol id="eye" viewBox="0 0 16 16"><ellipse cx="11.500" cy="12.500" rx="4" ry="2.500" fill="#fff" stroke="#333" stroke-width="1.200"/><circle cx="11.500" cy="12.500" r="1.500" fill="#222"/></symbol>
        <symbol id="planev" viewBox="0 0 16 16"><path d="M5 2h10l-3.500 8H1z" fill="none" stroke="#83602a" stroke-width="1.300"/><use href="#eye"/></symbol>
        <symbol id="axisv" viewBox="0 0 16 16"><path d="M8 0 6 4M5 6l-2 4M2 12l-2 4" stroke="#83602a" stroke-width="1.300"/><use href="#eye"/></symbol>
        <symbol id="pointv" viewBox="0 0 16 16"><path d="m1 0 4 4M5 0 1 4M10 2l4 4M14 2l-4 4M0 9l4 4M4 9l-4 4" stroke="#83602a" stroke-width="1.200"/><use href="#eye"/></symbol>
        <symbol id="csysv" viewBox="0 0 16 16"><path d="M5 1v9h10M5 10l-4 5M3.500 3 5 .8 6.500 3" stroke="#83602a" stroke-width="1.200" fill="none"/><use href="#eye"/></symbol>
        <symbol id="annov" viewBox="0 0 16 16"><path d="M.5 1.500h9v6h-9z" fill="#fff5d8" stroke="#999"/><path d="M10 4.500h5l-3 4M12 5.500v3h3" stroke="#333" fill="none"/><use href="#eye"/></symbol>
        <symbol id="spin" viewBox="0 0 16 16"><path d="m3 3 5 5 6 .5M8 8l-5 5" stroke="#333" stroke-width="1.200" fill="none"/><circle cx="3" cy="3" r="2.300" fill="#5aa860"/><circle cx="13.500" cy="8.500" r="2.300" fill="#dd4f4f"/><circle cx="3" cy="13.500" r="2.300" fill="#2f86b4"/></symbol>
        <symbol id="warnoff" viewBox="0 0 16 16"><path d="m7.500 2 6.500 12H1z" fill="none" stroke="#a7abad" stroke-width="2"/><circle cx="12" cy="12" r="3.500" fill="#ccc"/></symbol>
        <symbol id="pause" viewBox="0 0 16 16"><path d="M3 2h3.500v12H3zM9.500 2H13v12H9.500z" fill="#a5a9ac"/></symbol>
        <symbol id="stop" viewBox="0 0 16 16"><path d="M.5 2.500h14v11H.5l3-5z" fill="#c6c9ca"/><path d="M1 5h7q4 3 0 7H3" fill="#eee" stroke="#aaa"/></symbol>
    </svg>

    <header class="titlebar">
        <svg class="app-logo" viewBox="0 0 16 16"><use href="#cube"/></svg>
        <span class="brand">creo°</span>
        <div class="quick">
            <button class="qbtn" aria-label="新建"><svg class="ic" viewBox="0 0 16 16"><path d="M1.500 0h9l3 3v12h-12z" fill="#fff" stroke="#85898b"/></svg></button>
            <button class="qbtn" aria-label="打开"><svg class="ic" viewBox="0 0 16 16"><path d="M.5 14V1h5l1 2h7v4" fill="#f6d592" stroke="#a8833f"/><path d="m.5 14.500 3-8h12l-3 8z" fill="#fdebc3" stroke="#a8833f"/></svg></button>
            <button class="qbtn" aria-label="保存"><svg class="ic" viewBox="0 0 16 16"><path d="M1 0h14v15.500H1z" fill="#7e8487"/><path d="M4 0h8v7H4z" fill="#fff"/><path d="M4 10h8v5H4z" fill="#e5e5e5"/><path d="M9 11h2v4H9z" fill="#3b7d99"/></svg></button>
            <button class="qbtn" aria-label="撤消" disabled><svg class="ic" viewBox="0 0 16 16"><path d="M3 8q6-6 10-1 2 5-4 8M2 3v6h6" stroke="#a9aeb0" stroke-width="2" fill="none"/></svg></button>
            <i class="caret dim"></i>
            <button class="qbtn" aria-label="重做" disabled><svg class="ic" viewBox="0 0 16 16"><path d="M13 8Q7 2 3 7q-2 5 4 8M14 3v6H8" stroke="#a9aeb0" stroke-width="2" fill="none"/></svg></button>
            <i class="caret dim"></i>
            <button class="qbtn" aria-label="重新生成"><svg class="ic" viewBox="0 0 16 16"><path d="M1.500 1.500h3v3h-3zM1.500 6.500h3v3h-3zM1.500 11.500h3v3h-3z" fill="#b8eafc" stroke="#2083ac"/><path d="M6 10.500h9M6 14.500h9" stroke="#888"/><path d="M8 5q1-4 5-3M13 5q-2 4-5 1" stroke="#155f80" stroke-width="2" fill="none"/></svg></button>
            <button class="qbtn" aria-label="窗口"><svg class="ic" viewBox="0 0 16 16"><path d="M4 1.500h11v8H4z" fill="#e7f6fc" stroke="#1f7198"/><path d="M1 7.500h9v8H1z" fill="#fff" stroke="#1f7198"/><path d="M1 7h9v3H1z" fill="#2a87b0"/></svg></button>
            <i class="caret"></i>
            <button class="qbtn" aria-label="关闭窗口"><svg class="ic" viewBox="0 0 16 16"><path d="m3 4 10 10M13 4 3 14" stroke="#3b4144" stroke-width="4"/><path d="m4 5 8 8M12 5l-8 8" stroke="#fff" stroke-width="1.500"/></svg></button>
            <button class="qbtn" aria-label="网格"><svg class="ic" viewBox="0 0 16 16"><path d="M.5 1.500h15v14H.5z" fill="#ececec" stroke="#aaa"/><path d="M3 4h3v3H3zM10 4h3v3h-3zM3 10h3v3H3zM10 10h3v3h-3z" fill="#aaa"/></svg></button>
            <i class="caret"></i>
            <span class="qsep"></span>
            <i class="caret"></i>
        </div>
        <h1 class="window-title">PRT0003 (活动的) - Creo Parametric 9.0</h1>
        <div class="window-btns">
            <button aria-label="最小化"><svg viewBox="0 0 10 10"><path d="M0 7.500h9" stroke="#a9afaf" stroke-width="1.500"/></svg></button>
            <button aria-label="最大化"><svg viewBox="0 0 10 10"><path d="M.5.500h8v8h-8z" fill="none" stroke="#a9afaf"/></svg></button>
            <button aria-label="关闭"><svg viewBox="0 0 10 10"><path d="m1 1 8 8M9 1 1 9" stroke="#a9afaf" stroke-width="2"/></svg></button>
        </div>
    </header>

    <nav class="tabs">
        <button class="tab file">文件</button>
        <button class="tab active">模型</button>
        <button class="tab">分析</button>
        <button class="tab">实时仿真</button>
        <button class="tab">注释</button>
        <button class="tab">工具</button>
        <button class="tab">视图</button>
        <button class="tab">柔性建模</button>
        <button class="tab">应用程序</button>
        <div class="tab-tools">
            <button aria-label="最小化功能区"><svg viewBox="0 0 12 12"><path d="m0 7 6-6 6 6H8.500L6 5 3.500 7z" fill="#fff"/></svg></button>
            <button aria-label="搜索"><svg viewBox="0 0 12 12"><circle cx="7" cy="5" r="3.600" fill="none" stroke="#fff" stroke-width="1.600"/><path d="m4.500 7.500-4 3.500" stroke="#fff" stroke-width="2"/></svg></button>
            <button class="learn" aria-label="学习"><svg viewBox="0 0 12 12"><path d="m0 4 6-3 6 3-6 3zM2.500 6.500 6 8l3.500-1.500V9q-3.500 3-7 0zM.5 5v5h1V5z" fill="#fff"/></svg><i class="caret light"></i></button>
            <button class="help">?</button>
        </div>
    </nav>

    <section class="ribbon">
        <div class="group first">
            <div class="group-body">
                <button class="big"><svg class="ic32"><use href="#regen"/></svg><span>重新生成</span><i class="caret"></i></button>
                <div class="col">
                    <button class="btn" disabled><svg class="ic"><use href="#copy"/></svg>复制</button>
                    <button class="btn" disabled><svg class="ic"><use href="#paste"/></svg>粘贴<i class="caret dim"></i></button>
                    <button class="btn"><svg class="ic"><use href="#del"/></svg>删除<i class="caret"></i></button>
                </div>
            </div>
            <button class="group-name">操作<i class="caret"></i></button>
        </div>
        <div class="group">
            <div class="group-body">
                <div class="col">
                    <button class="btn"><svg class="ic"><use href="#udf"/></svg>用户定义特征</button>
                    <button class="btn"><svg class="ic"><use href="#copygeo"/></svg>复制几何</button>
                    <button class="btn"><svg class="ic"><use href="#boolean"/></svg>合并/继承</button>
                </div>
            </div>
            <button class="group-name">获取数据<i class="caret"></i></button>
        </div>
        <div class="group">
            <div class="group-body">
                <div class="col">
                    <button class="btn"><svg class="ic"><use href="#boolean"/></svg>布尔运算</button>
                    <button class="btn"><svg class="ic"><use href="#splitbody"/></svg>分割主体</button>
                    <button class="btn"><svg class="ic"><use href="#newbody"/></svg>新建主体</button>
                </div>
            </div>
            <button class="group-name">主体<i class="caret"></i></button>
        </div>
        <div class="group">
            <div class="group-body">
                <button class="big"><svg class="ic32"><use href="#plane"/></svg><span>平面</span></button>
                <div class="col">
                    <button class="btn"><svg class="ic"><use href="#axis"/></svg>轴</button>
                    <button class="btn"><svg class="ic"><use href="#point"/></svg>点<i class="caret"></i></button>
                    <button class="btn"><svg class="ic"><use href="#csys"/></svg>坐标系</button>
                </div>
                <button class="big"><svg class="ic32"><use href="#sketch"/></svg><span>草绘</span></button>
            </div>
            <button class="group-name">基准<i class="caret"></i></button>
        </div>
        <div class="group">
            <div class="group-body">
                <button class="big"><svg class="ic32"><use href="#extrude"/></svg><span>拉伸</span></button>
                <div class="col">
                    <button class="btn"><svg class="ic"><use href="#revolve"/></svg>旋转</button>
                    <button class="btn"><svg class="ic"><use href="#sweep"/></svg>扫描<i class="caret"></i></button>
                    <button class="btn"><svg class="ic"><use href="#blend"/></svg>扫描混合</button>
                </div>
            </div>
            <button class="group-name">形状<i class="caret"></i></button>
        </div>
        <div class="group">
            <div class="group-body">
                <div class="col">
                    <button class="btn"><svg class="ic"><use href="#hole"/></svg>孔</button>
                    <button class="btn"><svg class="ic"><use href="#round"/></svg>倒圆角<i class="caret"></i></button>
                    <button class="btn"><svg class="ic"><use href="#chamfer"/></svg>倒角<i class="caret"></i></button>
                </div>
                <div class="col">
                    <button class="btn"><svg class="ic"><use href="#rib"/></svg>筋<i class="caret"></i></button>
                    <button class="btn"><svg class="ic"><use href="#draft"/></svg>拔模<i class="caret"></i></button>
                    <button class="btn"><svg class="ic"><use href="#shell"/></svg>壳</button>
                </div>
            </div>
            <button class="group-name">工程<i class="caret"></i></button>
        </div>
        <div class="group">
            <div class="group-body">
                <button class="big"><svg class="ic32"><use href="#pattern"/></svg><span>阵列</span><i class="caret"></i></button>
                <div class="col">
                    <button class="btn" disabled><svg class="ic"><use href="#mirror"/></svg>镜像</button>
                    <button class="btn"><svg class="ic"><use href="#trim"/></svg>修剪</button>
                    <button class="btn" disabled><svg class="ic"><use href="#merge"/></svg>合并</button>
                </div>
                <div class="col">
                    <button class="btn" disabled><svg class="ic"><use href="#extend"/></svg>延伸</button>
                    <button class="btn" disabled><svg class="ic"><use href="#offset"/></svg>偏移</button>
                    <button class="btn"><svg class="ic"><use href="#intersect"/></svg>相交</button>
                </div>
                <div class="col">
                    <button class="btn"><svg class="ic"><use href="#project"/></svg>投影</button>
                    <button class="btn" disabled><svg class="ic"><use href="#thicken"/></svg>加厚</button>
                    <button class="btn"><svg class="ic"><use href="#solidify"/></svg>实体化</button>
                </div>
                <div class="col">
                    <button class="btn"><svg class="ic"><use href="#remove"/></svg>移除</button>
                    <button class="btn"><svg class="ic"><use href="#twist"/></svg>扭曲</button>
                    <button class="btn"><svg class="ic"><use href="#split"/></svg>分割<i class="caret"></i></button>
                </div>
            </div>
            <button class="group-name">编辑<i class="caret"></i></button>
        </div>
        <div class="group">
            <div class="group-body">
                <button class="big"><svg class="ic32"><use href="#boundary"/></svg><span>边界混合</span></button>
                <div class="col">
                    <button class="btn"><svg class="ic"><use href="#fill"/></svg>填充</button>
                    <button class="btn"><svg class="ic"><use href="#style"/></svg>样式</button>
                    <button class="btn"><svg class="ic"><use href="#freestyle"/></svg>自由式</button>
                </div>
            </div>
            <button class="group-name">曲面<i class="caret"></i></button>
        </div>
        <div class="group">
            <div class="group-body">
                <button class="big"><svg class="ic32"><use href="#compif"/></svg><span>元件界面</span></button>
                <button class="big"><svg class="ic32"><use href="#publish"/></svg><span>发布几何</span></button>
                <div class="col">
                    <button class="btn"><svg class="ic"><use href="#ball"/></svg>关系和参数</button>
                    <button class="btn"><svg class="ic"><use href="#bracket"/></svg>参数</button>
                    <button class="btn"><span class="ic deq">d=</span>关系</button>
                </div>
            </div>
            <button class="group-name">模型意图<i class="caret"></i></button>
        </div>
        <div class="group">
            <div class="group-body">
                <button class="big"><svg class="ic32"><use href="#measure"/></svg><span>测量</span><i class="caret"></i></button>
                <div class="col">
                    <button class="btn"><svg class="ic"><use href="#mass"/></svg>质量属性</button>
                    <button class="btn"><svg class="ic"><use href="#draftchk"/></svg>拔模斜度</button>
                </div>
            </div>
            <div class="group-name">测量</div>
        </div>
        <div class="group">
            <div class="group-body">
                <button class="big"><svg class="ic32"><use href="#section"/></svg><span>截面</span><i class="caret"></i></button>
                <button class="big"><svg class="ic32"><use href="#persp"/></svg><span>透视图</span></button>
                <button class="big"><svg class="ic32"><use href="#sphere"/></svg><span>外观</span><i class="caret"></i></button>
            </div>
            <div class="group-name">外观</div>
        </div>
        <div class="group">
            <div class="group-body">
                <div class="col">
                    <button class="btn"><svg class="ic"><use href="#savecopy"/></svg>保存副本</button>
                    <button class="btn"><svg class="ic"><use href="#delold"/></svg>删除旧版本</button>
                    <button class="btn"><svg class="ic"><use href="#erase"/></svg>拭除未显示的</button>
                </div>
            </div>
            <div class="group-name">保存删除</div>
        </div>
    </section>

    <main class="work">
        <aside class="side">
            <div class="side-tabs">
                <button class="side-tab active" aria-label="模型树"><svg class="ic"><use href="#mtree"/></svg></button>
                <button class="side-tab" aria-label="文件夹浏览器"><svg class="ic"><use href="#layers"/></svg></button>
                <button class="side-tab" aria-label="收藏夹"><svg class="ic"><use href="#favs"/></svg></button>
            </div>
            <div class="panels">
                <div class="panel model-tree">
                    <div class="toolbar">
                        <button class="tool" aria-label="模型"><svg class="ic"><use href="#gcube"/></svg></button>
                        <span class="grip"></span>
                        <button class="tool" aria-label="展开"><svg class="ic"><use href="#tlist"/></svg></button>
                        <button class="tool" aria-label="折叠"><svg class="ic"><use href="#tlist2"/></svg></button>
                        <button class="tool on" aria-label="显示列"><svg class="ic"><use href="#cols"/></svg></button>
                        <span class="tsep"></span>
                        <button class="tool" aria-label="新建"><svg class="ic"><use href="#newpart"/></svg></button>
                        <span class="tsep"></span>
                        <button class="tool" aria-label="树过滤器"><svg class="ic"><use href="#tfilter"/></svg></button>
                        <button class="tool" aria-label="树列"><svg class="ic"><use href="#tcols"/></svg></button>
                        <span class="tsep"></span>
                        <button class="tool more">»</button>
                        <button class="tool corner" aria-label="设置"><svg class="ic"><use href="#page"/></svg></button>
                    </div>
                    <div class="search">
                        <svg class="ic"><use href="#funnel"/></svg>
                        <div class="search-box">
                            <input type="text" aria-label="搜索模型树">
                            <button class="clear" aria-label="清除"><svg viewBox="0 0 10 10"><path d="m1 1 8 8M9 1 1 9" stroke="#a3a7a9" stroke-width="1.500"/></svg></button>
                        </div>
                        <button class="search-drop" aria-label="搜索选项"><i class="caret"></i></button>
                        <button class="search-add" aria-label="添加"><svg class="ic"><use href="#plus"/></svg></button>
                    </div>
                    <ul class="tree">
                        <li class="row"><svg class="ic"><use href="#cube"/></svg><span class="label"><svg class="badge" viewBox="0 0 9 9"><path d="m4.500.5 4 7.500h-8z" fill="#ffc61a" stroke="#d58f00"/></svg>PRT0003.PRT</span></li>
                        <li class="row"><span class="exp"></span><svg class="ic"><use href="#dplane"/></svg><span class="label">RIGHT</span></li>
                        <li class="row"><span class="exp"></span><svg class="ic"><use href="#dplane"/></svg><span class="label">TOP</span></li>
                        <li class="row"><span class="exp"></span><svg class="ic"><use href="#dplane"/></svg><span class="label">FRONT</span></li>
                        <li class="row"><span class="exp"></span><svg class="ic"><use href="#csys"/></svg><span class="label">PRT_CSYS_DEF</span></li>
                        <li class="row"><span class="exp shut"></span><svg class="ic"><use href="#ext"/></svg><span class="label">拉伸 1</span></li>
                        <li class="row"><span class="exp"></span><svg class="ic"><use href="#round"/></svg><span class="label">倒圆角 1</span></li>
                        <li class="row"><span class="exp shut"></span><svg class="ic"><use href="#ext"/></svg><span class="label">拉伸 2</span></li>
                        <li class="row"><span class="exp shut"></span><svg class="ic"><use href="#sweep"/></svg><span class="label picked"><svg class="badge" viewBox="0 0 9 9"><circle cx="4.500" cy="4.500" r="4" fill="#d8262c" stroke="#8d1216"/><path d="M4.500 1.500v3.500M4.500 6v1.500" stroke="#fff" stroke-width="1.500"/></svg>扫描 1</span></li>
                    </ul>
                    <div class="insert-here"></div>
                    <ul class="tree suppressed">
                        <li class="row"><span class="exp"></span><svg class="ic"><use href="#sweep"/></svg><span class="label">扫描 2</span></li>
                        <li class="row"><span class="exp"></span><svg class="ic"><use href="#ext"/></svg><span class="label">拉伸 3</span></li>
                        <li class="row"><span class="exp"></span><svg class="ic"><use href="#sweep"/></svg><span class="label">扫描 3</span></li>
                        <li class="row"><span class="exp"></span><svg class="ic"><use href="#ext"/></svg><span class="label">拉伸 4</span></li>
                        <li class="row"><span class="exp"></span><svg class="ic"><use href="#ext"/></svg><span class="label">拉伸 5</span></li>
                        <li class="row"><span class="exp"></span><svg class="ic"><use href="#ext"/></svg><span class="label">拉伸 6</span></li>
                        <li class="row"><span class="exp"></span><svg class="ic"><use href="#ext"/></svg><span class="label">拉伸 7</span></li>
                        <li class="row"><span class="exp"></span><svg class="ic"><use href="#round"/></svg><span class="label">倒圆角 2</span></li>
                        <li class="row"><span class="exp"></span><svg class="ic"><use href="#sweep"/></svg><span class="label">扫描 4</span></li>
                        <li class="row"><span class="exp"></span><svg class="ic"><use href="#sweep"/></svg><span class="label">扫描 5</span></li>
                        <li class="row"><span class="exp"></span><svg class="ic"><use href="#sweep"/></svg><span class="label">扫描 6</span></li>
                        <li class="row"><span class="exp"></span><svg class="ic"><use href="#curve"/></svg><span class="label">草绘 1</span></li>
                        <li class="row"><span class="exp"></span><svg class="ic"><use href="#ext"/></svg><span class="label">拉伸 8</span></li>
                        <li class="row"><span class="exp"></span><svg class="ic"><use href="#ext"/></svg><span class="label">拉伸 9</span></li>
                        <li class="row"><span class="exp"></span><svg class="ic"><use href="#ext"/></svg><span class="label">拉伸 10</span></li>
                        <li class="row"><span class="exp"></span><svg class="ic"><use href="#ext"/></svg><span class="label">拉伸 11</span></li>
                        <li class="row"><span class="exp"></span><svg class="ic"><use href="#round"/></svg><span class="label">倒圆角 3</span></li>
                        <li class="row"><span class="exp"></span><svg class="ic"><use href="#curve"/></svg><span class="label">草绘 2</span></li>
                    </ul>
                    <svg class="pointer" viewBox="0 0 126 75"><path d="m0 1 18 .5-4.500 3.500L68 34l56 39.500L68 43 11 11l-2 6z" fill="#ff2311"/></svg>
                </div>
                <div class="panel body-tree">
                    <div class="toolbar">
                        <button class="tool" aria-label="设计树"><svg class="ic"><use href="#treecube"/></svg></button>
                        <span class="grip"></span>
                        <button class="tool" aria-label="展开"><svg class="ic"><use href="#tlist"/></svg></button>
                        <button class="tool" aria-label="折叠"><svg class="ic"><use href="#tlist2"/></svg></button>
                        <span class="tsep"></span>
                        <button class="tool on" aria-label="主体"><svg class="ic"><use href="#bodyball"/></svg></button>
                        <button class="tool on" aria-label="面组"><svg class="ic"><use href="#quilt"/></svg></button>
                        <button class="tool corner last" aria-label="设置"><svg class="ic"><use href="#page"/></svg></button>
                    </div>
                    <ul class="tree">
                        <li class="row"><svg class="ic"><use href="#cube"/></svg><span class="label root">PRT0003.PRT</span></li>
                        <li class="row"><span class="exp open"></span><svg class="ic"><use href="#bodies"/></svg><span class="label">主体 (11)</span></li>
                        <li class="row l2"><span class="exp shut"></span><svg class="ic"><use href="#body"/></svg><span class="label">主体 1</span></li>
                        <li class="row l2"><span class="exp open"></span><svg class="ic"><use href="#body"/></svg><span class="label">主体 2</span></li>
                        <li class="row l3"><span class="exp"></span><svg class="ic"><use href="#ext"/></svg><span class="label">拉伸 2</span></li>
                        <li class="row l2"><span class="exp"></span><svg class="ic"><use href="#ebody"/></svg><span class="label">主体 3</span></li>
                        <li class="row l2"><span class="exp"></span><svg class="ic"><use href="#ebody"/></svg><span class="label">主体 4</span></li>
                        <li class="row l2"><span class="exp"></span><svg class="ic"><use href="#ebody"/></svg><span class="label">主体 5</span></li>
                        <li class="row l2"><span class="exp"></span><svg class="ic"><use href="#ebody"/></svg><span class="label">主体 6</span></li>
                        <li class="row l2"><span class="exp"></span><svg class="ic"><use href="#ebody"/></svg><span class="label">主体 7</span></li>
                        <li class="row l2"><span class="exp"></span><svg class="ic"><use href="#ebody"/></svg><span class="label">主体 8</span></li>
                        <li class="row l2"><span class="exp"></span><svg class="ic"><use href="#ebody"/></svg><span class="label">主体 9</span></li>
                        <li class="row l2"><span class="exp"></span><svg class="ic"><use href="#ebody"/></svg><span class="label">主体 10</span></li>
                        <li class="row l2"><span class="exp"></span><svg class="ic"><use href="#star"/></svg><span class="label">主体 11</span></li>
                    </ul>
                </div>
            </div>
        </aside>

        <section class="canvas">
            <div class="view-bar">
                <button aria-label="重新调整"><svg class="ic"><use href="#refit"/></svg></button>
                <button aria-label="放大"><svg class="ic"><use href="#zin"/></svg></button>
                <button aria-label="缩小"><svg class="ic"><use href="#zout"/></svg></button>
                <button aria-label="重画"><svg class="ic"><use href="#repaint"/></svg></button>
                <button class="corner" aria-label="渲染选项"><svg class="ic"><use href="#shade"/></svg></button>
                <button class="corner" aria-label="显示样式"><svg class="ic"><use href="#box"/></svg></button>
                <button class="corner" aria-label="已保存方向"><svg class="ic"><use href="#orient"/></svg></button>
                <button aria-label="视图管理器"><svg class="ic"><use href="#views"/></svg></button>
                <button aria-label="外观"><svg class="ic"><use href="#anno"/></svg></button>
                <button aria-label="透视图"><svg class="ic"><use href="#persp"/></svg></button>
                <button class="corner" aria-label="截面"><svg class="ic"><use href="#sect2"/></svg></button>
                <button class="corner" aria-label="基准显示"><svg class="ic"><use href="#dtm"/></svg></button>
                <button aria-label="平面显示"><svg class="ic"><use href="#planev"/></svg></button>
                <button aria-label="轴显示"><svg class="ic"><use href="#axisv"/></svg></button>
                <button aria-label="点显示"><svg class="ic"><use href="#pointv"/></svg></button>
                <button aria-label="坐标系显示"><svg class="ic"><use href="#csysv"/></svg></button>
                <button aria-label="注释显示"><svg class="ic"><use href="#annov"/></svg></button>
                <button aria-label="旋转中心"><svg class="ic"><use href="#spin"/></svg></button>
                <button aria-label="动画" disabled><svg class="ic"><use href="#warnoff"/></svg></button>
                <button aria-label="暂停" disabled><svg class="ic"><use href="#pause"/></svg></button>
                <button aria-label="停止" disabled><svg class="ic"><use href="#stop"/></svg></button>
            </div>
            <svg class="model" viewBox="0 0 384 62">
                <defs>
                    <linearGradient id="endL"><stop offset="0" stop-color="#8795a6"/><stop offset=".25" stop-color="#a0adbc"/><stop offset=".75" stop-color="#b5c3d6"/><stop offset="1" stop-color="#a0adbc"/></linearGradient>
                    <linearGradient id="endR"><stop offset="0" stop-color="#a0adbc"/><stop offset=".4" stop-color="#85909d"/><stop offset=".9" stop-color="#515860"/></linearGradient>
                </defs>
                <path d="M10 6.500h61v10H10z" fill="url(#endL)"/>
                <path d="M71.500 6.500h241v10h-241z" fill="#a0adbc"/>
                <path d="M312.500 6.500H374v10h-61.500z" fill="url(#endR)"/>
                <path d="M10 6.500h364M10 16.500h364M71.500 6v11M312.500 6v11" stroke="#1d2024" fill="none"/>
                <path d="M.5 21.500 5.500.5h5v46h363V.5h5l5 23v38H.5z" fill="#fafafa" stroke="#1d2024"/>
            </svg>
            <span class="mode">插入模式</span>
        </section>
    </main>

    <footer class="status">
        <button class="pane on" aria-label="导航器"><svg class="ic" viewBox="0 0 16 16"><path d="M.5 1.500h13v12H.5zM.5 5h13" fill="#fff" stroke="#8d9295"/><path d="M1 6h4v9H1z" fill="#9bdcf5" stroke="#1e6f95"/><use href="#eye"/></svg></button>
        <button class="pane" aria-label="浏览器"><svg class="ic" viewBox="0 0 16 16"><circle cx="8" cy="8.500" r="6.500" fill="#3a9ccc"/><path d="M5 4q3-2 5 0L9 8 6 9zM10 9l3 0-2 4z" fill="#bfe9fa"/><path d="M2 15Q-1 11 6 5t9.500-3Q17 5 10 11" fill="none" stroke="#6f7a80"/></svg></button>
        <button class="pane" aria-label="全屏"><svg class="ic" viewBox="0 0 16 16"><path d="M1.500 1.500h13v14h-13z" fill="#e3ebee" stroke="#256f8f"/></svg></button>
        <span class="ssep"></span>
        <div class="message"><svg class="msg-ic" viewBox="0 0 12 14"><path d="M.5 1.500h6l-3 5 4 6h-7z" fill="#5cc2ea" stroke="#1a6f97"/><path d="m7 1.500-3 5 4 6h3.500v-11z" fill="#e9f8fe" stroke="#1a6f97"/></svg>截面创建/修改中止。</div>
        <div class="status-right">
            <span class="ssep"></span>
            <button class="pane flag" aria-label="通知"><svg class="ic" viewBox="0 0 16 16"><path d="M2.500 0v16" stroke="#77797b"/><path d="m3 0 11 4.500L3 7z" fill="#e0363a"/></svg><small>1</small></button>
            <span class="ssep"></span>
            <button class="pane slim" aria-label="重新生成状态"><svg class="ic" viewBox="0 0 16 16"><path d="m.5 10 2-2h5v5l-2 2.500h-5z" fill="#e3f6fc" stroke="#489fc2"/><path d="M6 4.500q1-3 4-2.500M14 5q0 2.500-3 3.500" stroke="#155f80" stroke-width="1.600" fill="none"/><path d="m9.500 0 3 2-3 2.500zM11 6.500v4.500L8 8.500zM4 4.500h4L6 7zM12 5.500h4L14 3z" fill="#155f80"/></svg></button>
            <span class="ssep"></span>
            <div class="find">
                <button aria-label="查找"><svg class="ic" viewBox="0 0 16 16"><path d="M2 3 5 0h1.500v4h3V0H11l3 3 2 8v5h-6V9H6v7H0v-5z" fill="#3a3d3f"/><path d="M3 5v6M13 5v6" stroke="#aaa"/></svg></button>
                <button class="find-drop" aria-label="查找选项"><i class="caret"></i></button>
            </div>
            <span class="ssep"></span>
            <span class="count">选择了 1 项</span>
            <div class="filter">
                <select aria-label="选择过滤器"><option>几何</option></select>
                <i class="caret"></i>
            </div>
        </div>
    </footer>

    <div class="watermark">
        <div class="wm-name"><span class="wm-red">野火</span><svg class="flame" viewBox="0 0 18 42"><path d="M6 0q14 12 11 25-3 9-11 17-7-4-4-13 8-8 2-20 7 5 8 12 1-11-6-21z" fill="#ff6433"/></svg><span>论坛</span></div>
        <div class="wm-url">www.proewildfire.cn</div>
    </div>
</body>

</html>
```
FILE: styles.css
```css
* {
    margin: 0;
    padding: 0;
    box-sizing: border-box;
}

body {
    display: flex;
    flex-direction: column;
    height: 100vh;
    overflow: hidden;
    position: relative;
    background-color: #f8fafc;
    color: #44494c;
    font-family: "Open Sans", "Noto Sans CJK SC", sans-serif;
    font-size: 12px;
    line-height: 16px;
}

button {
    border: none;
    background: transparent;
    color: inherit;
    font: inherit;
    white-space: nowrap;
}

button:disabled {
    color: #adb1b3;
}

.sprite {
    position: absolute;
    width: 0;
    height: 0;
}

.ic {
    width: 16px;
    height: 16px;
    flex: none;
    display: block;
}

.ic32 {
    width: 32px;
    height: 32px;
    display: block;
}

.caret {
    display: block;
    flex: none;
    width: 8px;
    height: 5px;
    background-color: #555b5e;
    clip-path: polygon(0 0, 100% 0, 50% 100%);
}

.caret.dim {
    background-color: #b3b7b9;
}

.caret.light {
    background-color: white;
}

/* title bar */
.titlebar {
    display: flex;
    align-items: flex-end;
    height: 16px;
    overflow: hidden;
    flex: none;
    position: relative;
    padding: 0 5px 6px 4px;
    background-color: #d9dfde;
}

.app-logo {
    width: 16px;
    height: 16px;
}

.brand {
    margin-left: 5px;
    font-size: 20px;
    line-height: 18px;
    color: #4b5254;
    width: 50px;
}

.quick {
    display: flex;
    align-items: flex-end;
    gap: 8px;
    margin-left: 7px;
}

.quick .caret {
    width: 7px;
    margin-bottom: 6px;
}

.qbtn {
    height: 16px;
    width: 16px;
}

.qsep {
    width: 1px;
    height: 16px;
    margin-left: -4px;
    background-color: #aeb4b4;
}

.window-title {
    position: absolute;
    left: 0;
    right: 0;
    bottom: 5px;
    text-align: center;
    font-size: 13px;
    font-weight: normal;
    color: #b3baba;
}

.window-btns {
    display: flex;
    gap: 17px;
    margin-left: auto;
    padding-bottom: 3px;
}

.window-btns svg {
    width: 10px;
    height: 10px;
    display: block;
}

/* ribbon tabs */
.tabs {
    display: flex;
    flex: none;
    height: 29px;
    background-color: #3d4647;
    color: white;
}

.tab {
    padding: 0 24px 0 23px;
    font-size: 13px;
}

.tab.file {
    padding: 0 20px 0 16px;
    background: linear-gradient(#66cf45, #4da62f);
}

.tab.active {
    background-color: #f8fafc;
    color: #4a8a2b;
}

.tab-tools {
    display: flex;
    align-items: center;
    gap: 11px;
    margin-left: auto;
    padding: 0 1px 4px 0;
}

.tab-tools svg {
    width: 12px;
    height: 12px;
    display: block;
}

.learn {
    display: flex;
    align-items: center;
    gap: 8px;
}

.help {
    margin-left: 2px;
    font-size: 13px;
    font-weight: bold;
}

/* ribbon */
.ribbon {
    display: flex;
    flex: none;
    height: 113px;
    padding-top: 1px;
    border-bottom: 1px solid #b3bcbe;
    background-color: #f8fafc;
}

.group {
    display: flex;
    flex-direction: column;
    margin-bottom: 2px;
    border-right: 1px solid #b4b9bb;
}

.group-body {
    display: flex;
    flex: none;
    gap: 8px;
    height: 84px;
    padding: 0 7px;
}

.group.first .group-body {
    padding-left: 3px;
}

.group-name {
    display: flex;
    align-items: center;
    justify-content: center;
    gap: 2px;
    height: 25px;
    padding-top: 4px;
}

.big {
    display: flex;
    flex-direction: column;
    align-items: center;
    min-width: 32px;
    padding-top: 5px;
}

.big span {
    margin-top: 9px;
}

.big .caret {
    margin-top: 6px;
}

.btn {
    display: flex;
    align-items: center;
    gap: 4px;
    height: 28px;
}

.btn .caret {
    margin-left: 2px;
}

.deq {
    font-size: 14px;
    font-weight: bold;
    text-align: left;
}

/* left side */
.work {
    display: flex;
    flex: 1;
    min-height: 0;
}

.side {
    display: flex;
    flex-direction: column;
    flex: none;
    border-right: 3px solid #d9dfde;
}

.side-tabs {
    display: flex;
    gap: 2px;
    height: 26px;
    background-color: #d9dfde;
}

.side-tab {
    display: flex;
    align-items: center;
    justify-content: center;
    width: 28px;
}

.side-tab:last-child {
    width: 32px;
}

.side-tab.active {
    background-color: #f8fafc;
}

.panels {
    display: flex;
    flex: 1;
    min-height: 0;
}

.panel {
    position: relative;
    color: #55595c;
}

.model-tree {
    width: 268px;
    margin-bottom: 5px;
    border-right: 3px solid #d9dfde;
}

.body-tree {
    width: 260px;
}

.toolbar {
    display: flex;
    align-items: center;
    height: 32px;
    padding-left: 2px;
}

.body-tree .toolbar {
    padding-left: 0;
}

.tool {
    display: flex;
    align-items: center;
    justify-content: center;
    flex: none;
    width: 24px;
    height: 24px;
}

.tool.on {
    background-color: #dfe1e2;
    border: 1px solid #b0b4b6;
}

.tool.more {
    font-size: 18px;
    padding-bottom: 3px;
}

.tool.last {
    margin-left: auto;
    margin-right: 6px;
}

.corner {
    position: relative;
}

.corner::after {
    content: "";
    position: absolute;
    right: 2px;
    bottom: 2px;
    width: 3px;
    height: 3px;
    background-color: #3b4144;
    clip-path: polygon(100% 0, 100% 100%, 0 100%);
}

.grip {
    width: 4px;
    height: 14px;
    margin: 0 13px 0 2px;
    border-left: 2px dotted #a6aaac;
}

.body-tree .grip {
    margin-left: 3px;
}

.tsep {
    width: 1px;
    height: 24px;
    margin: 0 4px;
    background-color: #b4b8ba;
}

.search {
    display: flex;
    align-items: center;
    height: 29px;
    padding-left: 8px;
}

.search-box {
    display: flex;
    align-items: center;
    flex: 1;
    height: 29px;
    margin-left: 4px;
    border: 1px solid #a9adaf;
    background-color: white;
}

.search-box input {
    flex: 1;
    min-width: 0;
    height: 24px;
    padding: 0 4px;
    border: none;
    outline: none;
    background: transparent;
    font: inherit;
}

.clear {
    width: 18px;
    height: 18px;
}

.clear svg {
    width: 8px;
    height: 8px;
    display: block;
    margin: 0 auto;
}

.search-drop {
    padding: 6px 5px 6px 6px;
}

.search-add {
    padding: 0 4px;
}

.tree {
    list-style: none;
}

.model-tree .tree {
    padding-left: 7px;
}

.search + .tree {
    margin-top: 5px;
}

.body-tree .tree {
    padding-left: 3px;
    margin-top: 1px;
}

.row {
    display: flex;
    align-items: center;
    height: 22px;
}

.row.l2 {
    padding-left: 20px;
}

.row.l3 {
    padding-left: 40px;
}

.exp {
    display: flex;
    justify-content: center;
    width: 20px;
    padding-right: 2px;
}

.exp.shut::before {
    content: "";
    width: 8px;
    height: 10px;
    background-color: #84898b;
    clip-path: polygon(0 0, 100% 50%, 0 100%);
}

.exp.open::before {
    content: "";
    width: 10px;
    height: 8px;
    background-color: #84898b;
    clip-path: polygon(0 0, 100% 0, 50% 100%);
}

.label {
    display: flex;
    margin-left: 4px;
    padding: 2px 3px 3px 1px;
}

.label.root {
    color: #fb4b4b;
}

.label.picked {
    background-color: #b0e2ff;
    color: #222;
    font-weight: bold;
}

.badge {
    width: 9px;
    height: 9px;
    margin-right: 1px;
}

.insert-here {
    position: relative;
    height: 2px;
    margin: 6px 0 1px 7px;
    background-color: #5dcf3c;
}

.insert-here::before,
.insert-here::after {
    content: "";
    position: absolute;
    top: -2px;
    width: 3px;
    height: 6px;
    background-color: #5dcf3c;
}

.insert-here::before {
    left: 0;
    clip-path: polygon(0 0, 100% 50%, 0 100%);
}

.insert-here::after {
    right: 0;
    clip-path: polygon(100% 0, 100% 100%, 0 50%);
}

.model-tree .suppressed {
    margin-left: 7px;
    padding: 5px 0 0;
    background-color: #e4e4e4;
    color: #85888a;
}

.suppressed .ic {
    opacity: 0.7;
}

.suppressed .label::before {
    content: "";
    width: 4px;
    height: 5px;
    margin: 1px 2px 0 0;
    background-color: #77797b;
}

.pointer {
    position: absolute;
    left: 99px;
    top: 259px;
    width: 126px;
    height: 75px;
}

/* graphics area */
.canvas {
    position: relative;
    flex: 1;
    background: linear-gradient(#c6dbec, #5b7aa9);
}

.view-bar {
    display: flex;
    width: max-content;
    margin: 7px auto 0;
    padding: 0 2px;
    border: 1px solid #a0a4a8;
    background-color: #f8f9fb;
    position: relative;
    left: 3px;
}

.view-bar button {
    display: flex;
    align-items: center;
    justify-content: center;
    width: 26px;
    height: 30px;
}

.view-bar .corner::after {
    bottom: 5px;
}

.model {
    position: absolute;
    left: 341px;
    top: 374px;
    width: 384px;
    height: 62px;
}

.mode {
    position: absolute;
    left: 8px;
    bottom: 92px;
    font-size: 8px;
    color: #877c7e;
}

/* status bar */
.status {
    display: flex;
    flex: none;
    height: 28px;
    padding: 6px 12px 0 2px;
    border-top: 1px solid #b3bcbe;
    background-color: #f7fbfb;
    overflow: hidden;
}

.pane {
    display: flex;
    align-items: center;
    justify-content: center;
    flex: none;
    width: 22px;
    height: 24px;
    margin-right: 4px;
}

.pane.on {
    background-color: #dfe1e2;
    border: 1px solid #a9adaf;
}

.ssep {
    width: 1px;
    height: 24px;
    background-color: #b0b5b7;
}

.pane + .ssep {
    margin-left: 5px;
}

.message {
    display: flex;
    align-items: center;
    height: 22px;
    margin-left: 3px;
    font-size: 11px;
}

.msg-ic {
    width: 12px;
    height: 14px;
}

.status-right {
    display: flex;
    margin-left: auto;
}

.flag {
    justify-content: flex-start;
    width: 22px;
    margin: 0 7px 0 5px;
}

.flag small {
    margin: 6px 0 0 -11px;
    font-size: 9px;
    line-height: 10px;
}

.slim {
    margin: 0;
}

.status-right .slim + .ssep {
    margin-left: 2px;
}

.find {
    display: flex;
    height: 24px;
    margin: 0 2px;
    border: 1px solid #b0b5b7;
}

.find button {
    display: flex;
    align-items: center;
    justify-content: center;
    width: 27px;
}

.find .find-drop {
    width: 14px;
    border-left: 1px solid #b0b5b7;
}

.count {
    width: 92px;
    margin-left: 5px;
    line-height: 24px;
}

.filter {
    position: relative;
}

.filter select {
    appearance: none;
    width: 176px;
    height: 24px;
    padding: 0 8px;
    border: 1px solid #a9adaf;
    border-radius: 0;
    background-color: #f7fbfb;
    color: #55595c;
    font: inherit;
}

.filter .caret {
    position: absolute;
    right: 5px;
    top: 10px;
    pointer-events: none;
}

/* forum watermark */
.watermark {
    position: absolute;
    right: 23px;
    bottom: 7px;
    font-style: italic;
}

.wm-name {
    display: flex;
    align-items: flex-end;
    font-family: "Noto Sans CJK SC", sans-serif;
    font-size: 40px;
    font-weight: 300;
    line-height: 40px;
    color: black;
}

.wm-red {
    color: #ff6433;
}

.flame {
    width: 18px;
    height: 42px;
    margin: 0 2px 15px -14px;
}

.wm-url {
    font-family: "DejaVu Sans", sans-serif;
    font-size: 15px;
    line-height: 18px;
    color: #8b9094;
}
```
